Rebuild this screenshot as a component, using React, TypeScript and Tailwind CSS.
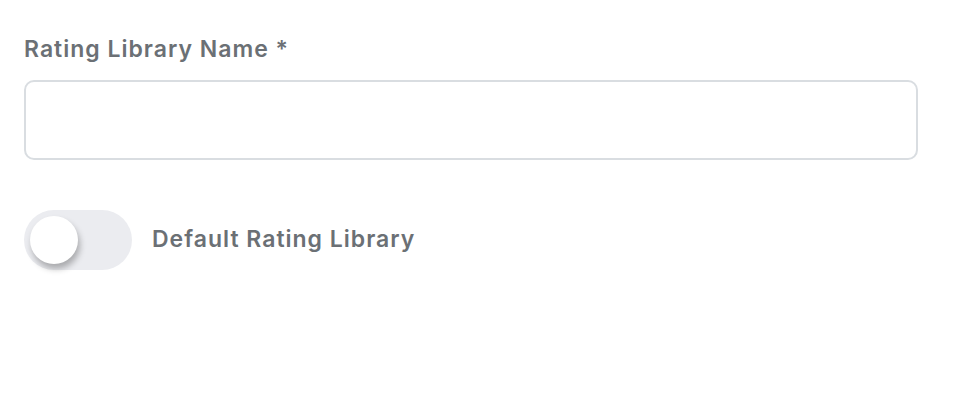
import { useState } from 'react'

export default function App() {
  const [name, setName] = useState('')
  const [isDefault, setIsDefault] = useState(false)

  return (
    <div className="min-h-screen bg-white font-['Inter',sans-serif]">
      <div className="w-[918px] pl-6 pt-[31px]">
        {/* Library name */}
        <label
          htmlFor="libraryName"
          className="block text-[23px] leading-9 font-semibold tracking-[1px] text-[#6b7075]"
        >
          Rating Library Name *
        </label>
        <input
          id="libraryName"
          value={name}
          onChange={(e) => setName(e.target.value)}
          className="mt-[13px] block h-20 w-full rounded-[10px] border-2 border-[#d9dde1] bg-white px-4 text-lg text-[#3c4043] focus:outline-none"
        />

        {/* Default toggle */}
        <div className="mt-[50px] flex items-center gap-5">
          <button
            type="button"
            onClick={() => setIsDefault(!isDefault)}
            className={`flex h-[60px] w-[108px] items-center rounded-full px-[6px] transition-colors ${
              isDefault ? 'bg-[#3b82f6]' : 'bg-[#ebecf0]'
            }`}
          >
            <span
              className={`block h-12 w-12 rounded-full bg-white shadow-[2px_5px_6px_rgba(0,0,0,0.28)] transition-transform ${
                isDefault ? 'translate-x-12' : 'translate-x-0'
              }`}
            />
          </button>
          <span className="-mt-0.5 text-[23px] font-semibold tracking-[1px] text-[#6b7075]">
            Default Rating Library
          </span>
        </div>
      </div>
    </div>
  )
}
